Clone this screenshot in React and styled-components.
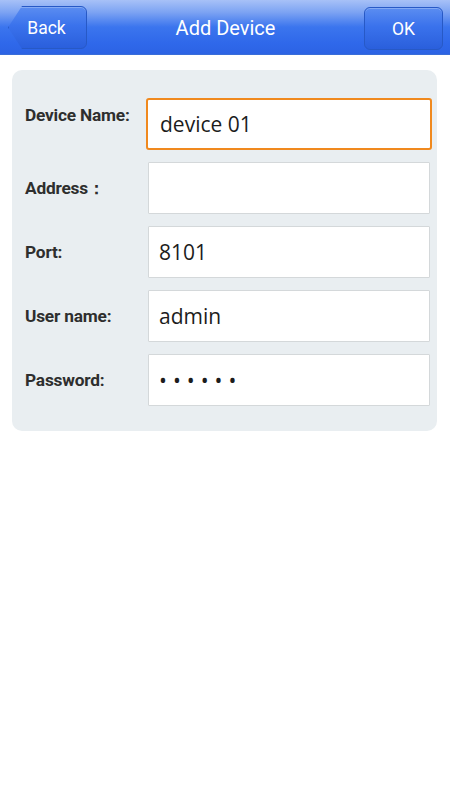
import React, { useState } from 'react';
import styled, { createGlobalStyle } from 'styled-components';

const GlobalStyle = createGlobalStyle`
  html, body {
    margin: 0;
    padding: 0;
    background: #ffffff;
    font-family: Roboto, 'Liberation Sans', sans-serif;
  }
  * { box-sizing: border-box; }
`;

const fields = [
  { key: 'name', label: 'Device Name:', value: 'device 01', focused: true, lift: true },
  { key: 'address', label: 'Address\uFF1A', value: '' },
  { key: 'port', label: 'Port:', value: '8101' },
  { key: 'user', label: 'User name:', value: 'admin' },
  { key: 'password', label: 'Password:', value: '\u2022\u2022\u2022\u2022\u2022\u2022', secret: true },
];

function App() {
  const [values, setValues] = useState(
    Object.fromEntries(fields.map((f) => [f.key, f.value]))
  );

  return (
    <Page>
      <GlobalStyle />
      <Header>
        <BackButton>Back</BackButton>
        <Title>Add Device</Title>
        <OkButton>OK</OkButton>
      </Header>
      <Card>
        {fields.map((f) => (
          <Row key={f.key}>
            <Label lift={f.lift}>{f.label}</Label>
            <Field
              focused={f.focused}
              secret={f.secret}
              value={values[f.key]}
              onChange={(e) => setValues({ ...values, [f.key]: e.target.value })}
            />
          </Row>
        ))}
      </Card>
    </Page>
  );
}

const Page = styled.div`
  width: 450px;
  min-height: 800px;
  background: #ffffff;
`;

const Header = styled.div`
  height: 55px;
  padding: 6px 7px 0 8px;
  display: flex;
  align-items: flex-start;
  justify-content: space-between;
  background: linear-gradient(
    to bottom,
    #a7c1f7 0%,
    #7ea4f3 22%,
    #3b75ee 50%,
    #2f68ea 80%,
    #2c63e4 100%
  );
  border-bottom: 1px solid #3a6dd8;
`;

const Title = styled.div`
  flex: 1;
  text-align: center;
  color: #ffffff;
  font-size: 20px;
  line-height: 44px;
`;

const HeaderButton = styled.button`
  width: 79px;
  height: 43px;
  border: 1px solid #2759c6;
  border-radius: 6px;
  color: #ffffff;
  font-family: Roboto, 'Liberation Sans', sans-serif;
  font-size: 17.5px;
  background: linear-gradient(to bottom, #5b8df1 0%, #3a72ec 45%, #2a5fdc 100%);
  box-shadow: inset 0 1px 0 rgba(255, 255, 255, 0.25);
  cursor: pointer;
`;

const BackButton = styled(HeaderButton)`
  padding-left: 4px;
  clip-path: polygon(14px 0, 100% 0, 100% 100%, 14px 100%, 0 50%);
`;

const OkButton = styled(HeaderButton)`
  margin-top: 1px;
`;

const Card = styled.div`
  margin: 15px 13px 0 12px;
  padding: 28px 7px 25px 13px;
  background: #e9eef1;
  border-radius: 10px;
  display: flex;
  flex-direction: column;
  gap: 12px;
`;

const Row = styled.div`
  display: flex;
  align-items: center;
  height: 52px;
`;

const Label = styled.div`
  width: 123px;
  color: #2e2e2e;
  font-size: 17.3px;
  font-weight: 700;
  letter-spacing: -0.2px;
  white-space: nowrap;
  align-self: ${(p) => (p.lift ? 'flex-start' : 'center')};
  margin-top: ${(p) => (p.lift ? '7px' : '0')};
`;

const Field = styled.input.attrs({ type: 'text' })`
  flex: 1;
  min-width: 0;
  height: 52px;
  margin: ${(p) => (p.focused ? '0 -2px 0 -2px' : '0')};
  padding: 0 ${(p) => (p.focused ? '12px' : '10px')};
  border: ${(p) => (p.focused ? '2px solid #f0891e' : '1px solid #d4d8da')};
  border-radius: ${(p) => (p.focused ? '3px' : '1px')};
  background: #ffffff;
  color: #1c1c1c;
  font-family: 'Open Sans', 'Noto Sans', sans-serif;
  font-size: 21px;
  letter-spacing: ${(p) => (p.secret ? '6px' : '0')};
  outline: none;
`;

export default App;
